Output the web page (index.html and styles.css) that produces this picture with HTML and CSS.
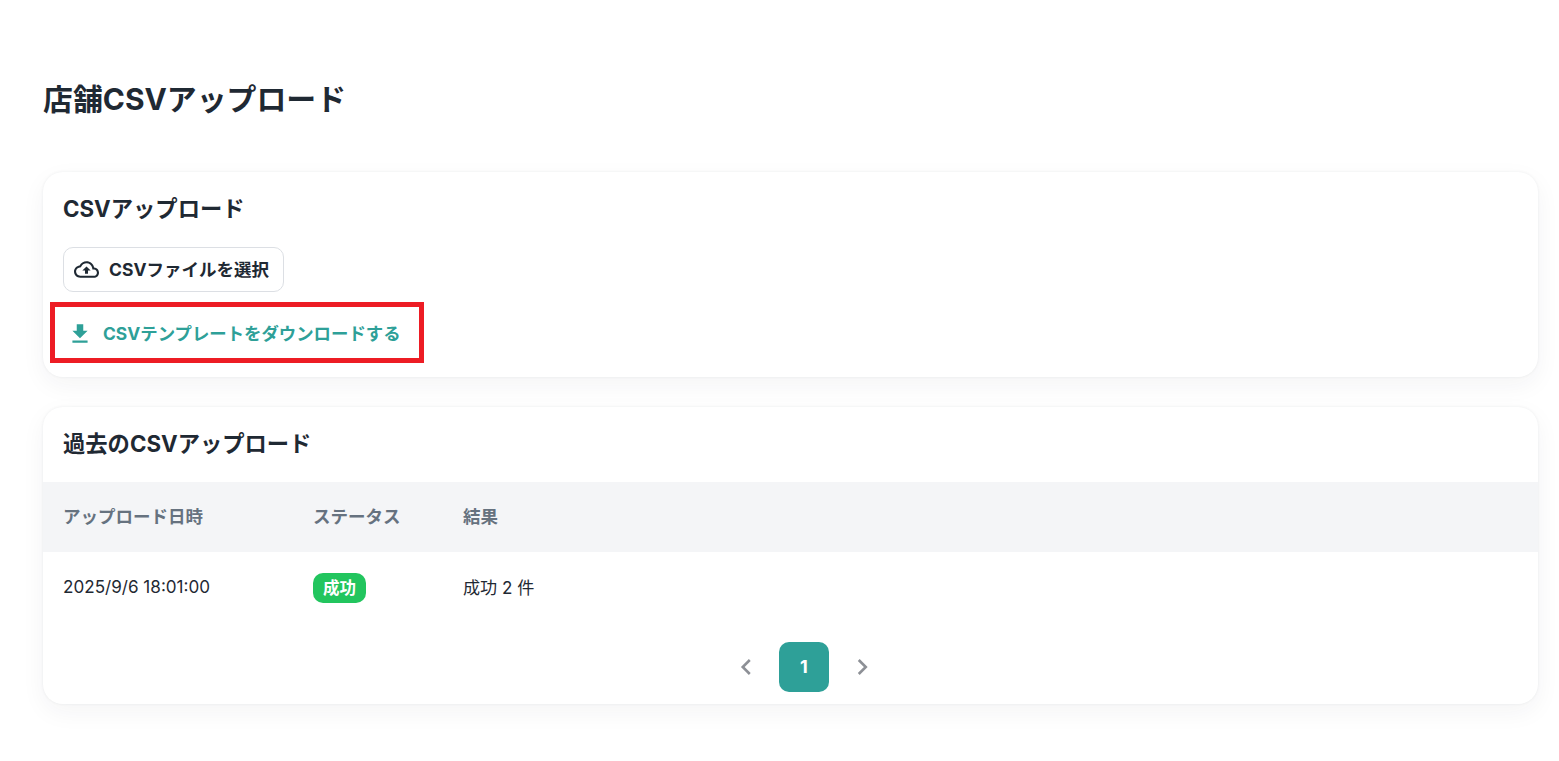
FILE: index.html
```html
<!DOCTYPE html>
<html lang="ja">
<head>
    <meta charset="UTF-8">
    <title>店舗CSVアップロード</title>
    <link rel="stylesheet" href="styles.css">
</head>
<body>

<main class="page">
    <h1 class="page-title">店舗CSVアップロード</h1>

    <section class="card upload-card">
        <h2 class="card-title">CSVアップロード</h2>
        <button class="file-button" type="button">
            <svg class="file-icon" viewBox="0 4 24 16" fill="currentColor">
                <path d="M19.35 10.04C18.67 6.59 15.64 4 12 4 9.11 4 6.6 5.64 5.35 8.04 2.34 8.36 0 10.91 0 14c0 3.31 2.69 6 6 6h13c2.76 0 5-2.24 5-5 0-2.64-2.05-4.78-4.65-4.96zM19 18H6c-2.21 0-4-1.79-4-4 0-2.05 1.53-3.76 3.56-3.97l1.07-.11.5-.95C8.08 7.14 9.94 6 12 6c2.62 0 4.88 1.86 5.39 4.43l.3 1.5 1.53.11c1.56.1 2.78 1.41 2.78 2.96 0 1.65-1.35 3-3 3zM8 13h2.55v3h2.9v-3H16l-4-4z"/>
            </svg>
            <span class="file-label">CSVファイルを選択</span>
        </button>
        <a class="download-link" href="#">
            <svg class="download-icon" viewBox="0 0 24 24" fill="currentColor">
                <path d="M19 9h-4V3H9v6H5l7 7 7-7zM5 18v2h14v-2H5z"/>
            </svg>
            CSVテンプレートをダウンロードする
        </a>
        <div class="highlight"></div>
    </section>

    <section class="card history-card">
        <h2 class="card-title history-title">過去のCSVアップロード</h2>
        <table class="history-table">
            <thead>
                <tr>
                    <th class="col-date">アップロード日時</th>
                    <th class="col-status">ステータス</th>
                    <th>結果</th>
                </tr>
            </thead>
            <tbody>
                <tr>
                    <td>2025/9/6 18:01:00</td>
                    <td><span class="badge">成功</span></td>
                    <td>成功 2 件</td>
                </tr>
            </tbody>
        </table>
        <nav class="pagination">
            <svg class="page-arrow" viewBox="0 0 24 24" fill="none" stroke="currentColor" stroke-width="2.4">
                <path d="M15.500 5.500L9 12l6.500 6.500"/>
            </svg>
            <span class="page-current">1</span>
            <svg class="page-arrow" viewBox="0 0 24 24" fill="none" stroke="currentColor" stroke-width="2.4">
                <path d="M9 5.500l6.500 6.500L9 18.500"/>
            </svg>
        </nav>
    </section>
</main>

</body>
</html>
```

FILE: styles.css
```css
* {
    box-sizing: border-box;
}

body {
    margin: 0;
    background-color: #fff;
    color: #1f2933;
    font-family: 'Inter', 'Noto Sans CJK JP', sans-serif;
}

.page {
    padding: 77px 21px 40px 43px;
}

.page-title {
    margin: 0 0 51px;
    font-size: 29.900px;
    line-height: 44px;
    font-weight: 700;
}

.card {
    position: relative;
    background-color: #fff;
    border-radius: 20px;
    box-shadow: 0 0 3px rgba(31, 41, 51, 0.07), 0 8px 24px rgba(31, 41, 51, 0.05);
}

.upload-card {
    height: 205px;
    padding: 20px;
    margin-bottom: 30px;
}

.card-title {
    margin: 0;
    font-size: 22.300px;
    line-height: 34px;
    font-weight: 700;
}

.file-button {
    display: flex;
    align-items: center;
    gap: 10px;
    width: 221px;
    height: 45px;
    margin-top: 21px;
    padding: 0 10px;
    background-color: #fff;
    border: 1px solid #dcdfe4;
    border-radius: 10px;
    color: #1f2933;
    font-family: inherit;
    font-size: 17.500px;
    font-weight: 700;
}

.file-icon {
    width: 25px;
    height: 17px;
}

.file-label {
    padding-bottom: 3px;
}

.download-link {
    display: flex;
    align-items: center;
    gap: 10px;
    margin-top: 29px;
    padding-left: 4px;
    color: #2ea098;
    font-size: 17.400px;
    line-height: 26px;
    font-weight: 700;
    text-decoration: none;
}

.download-icon {
    width: 26px;
    height: 26px;
}

/* annotation box over the download link */
.highlight {
    position: absolute;
    left: 7px;
    top: 130px;
    width: 374px;
    height: 61px;
    border: 5px solid #ed1c24;
}

.history-card {
    height: 297px;
}

.history-title {
    padding: 20px 20px 21px;
}

.history-table {
    width: 100%;
    border-collapse: collapse;
    font-size: 17.100px;
}

.history-table th {
    height: 70px;
    padding: 0 20px 3px;
    background-color: #f4f5f7;
    color: #66727f;
    font-size: 17.500px;
    font-weight: 700;
    text-align: left;
}

.history-table td {
    height: 71px;
    padding: 0 20px 2px;
}

.col-date {
    width: 250px;
}

.col-status {
    width: 150px;
}

.badge {
    display: inline-block;
    margin-top: 2px;
    padding: 0 10px;
    background-color: #22c55e;
    border-radius: 10px;
    color: #fff;
    font-size: 16.500px;
    line-height: 30px;
    font-weight: 700;
    vertical-align: middle;
}

.pagination {
    display: flex;
    justify-content: center;
    align-items: center;
    gap: 20px;
    margin-top: 19px;
    padding-left: 27px;
}

.page-arrow {
    width: 26px;
    height: 26px;
    color: #8d9096;
}

.page-current {
    width: 50px;
    height: 50px;
    background-color: #2ea098;
    border-radius: 10px;
    color: #fff;
    font-size: 18px;
    line-height: 50px;
    font-weight: 700;
    text-align: center;
}
```
